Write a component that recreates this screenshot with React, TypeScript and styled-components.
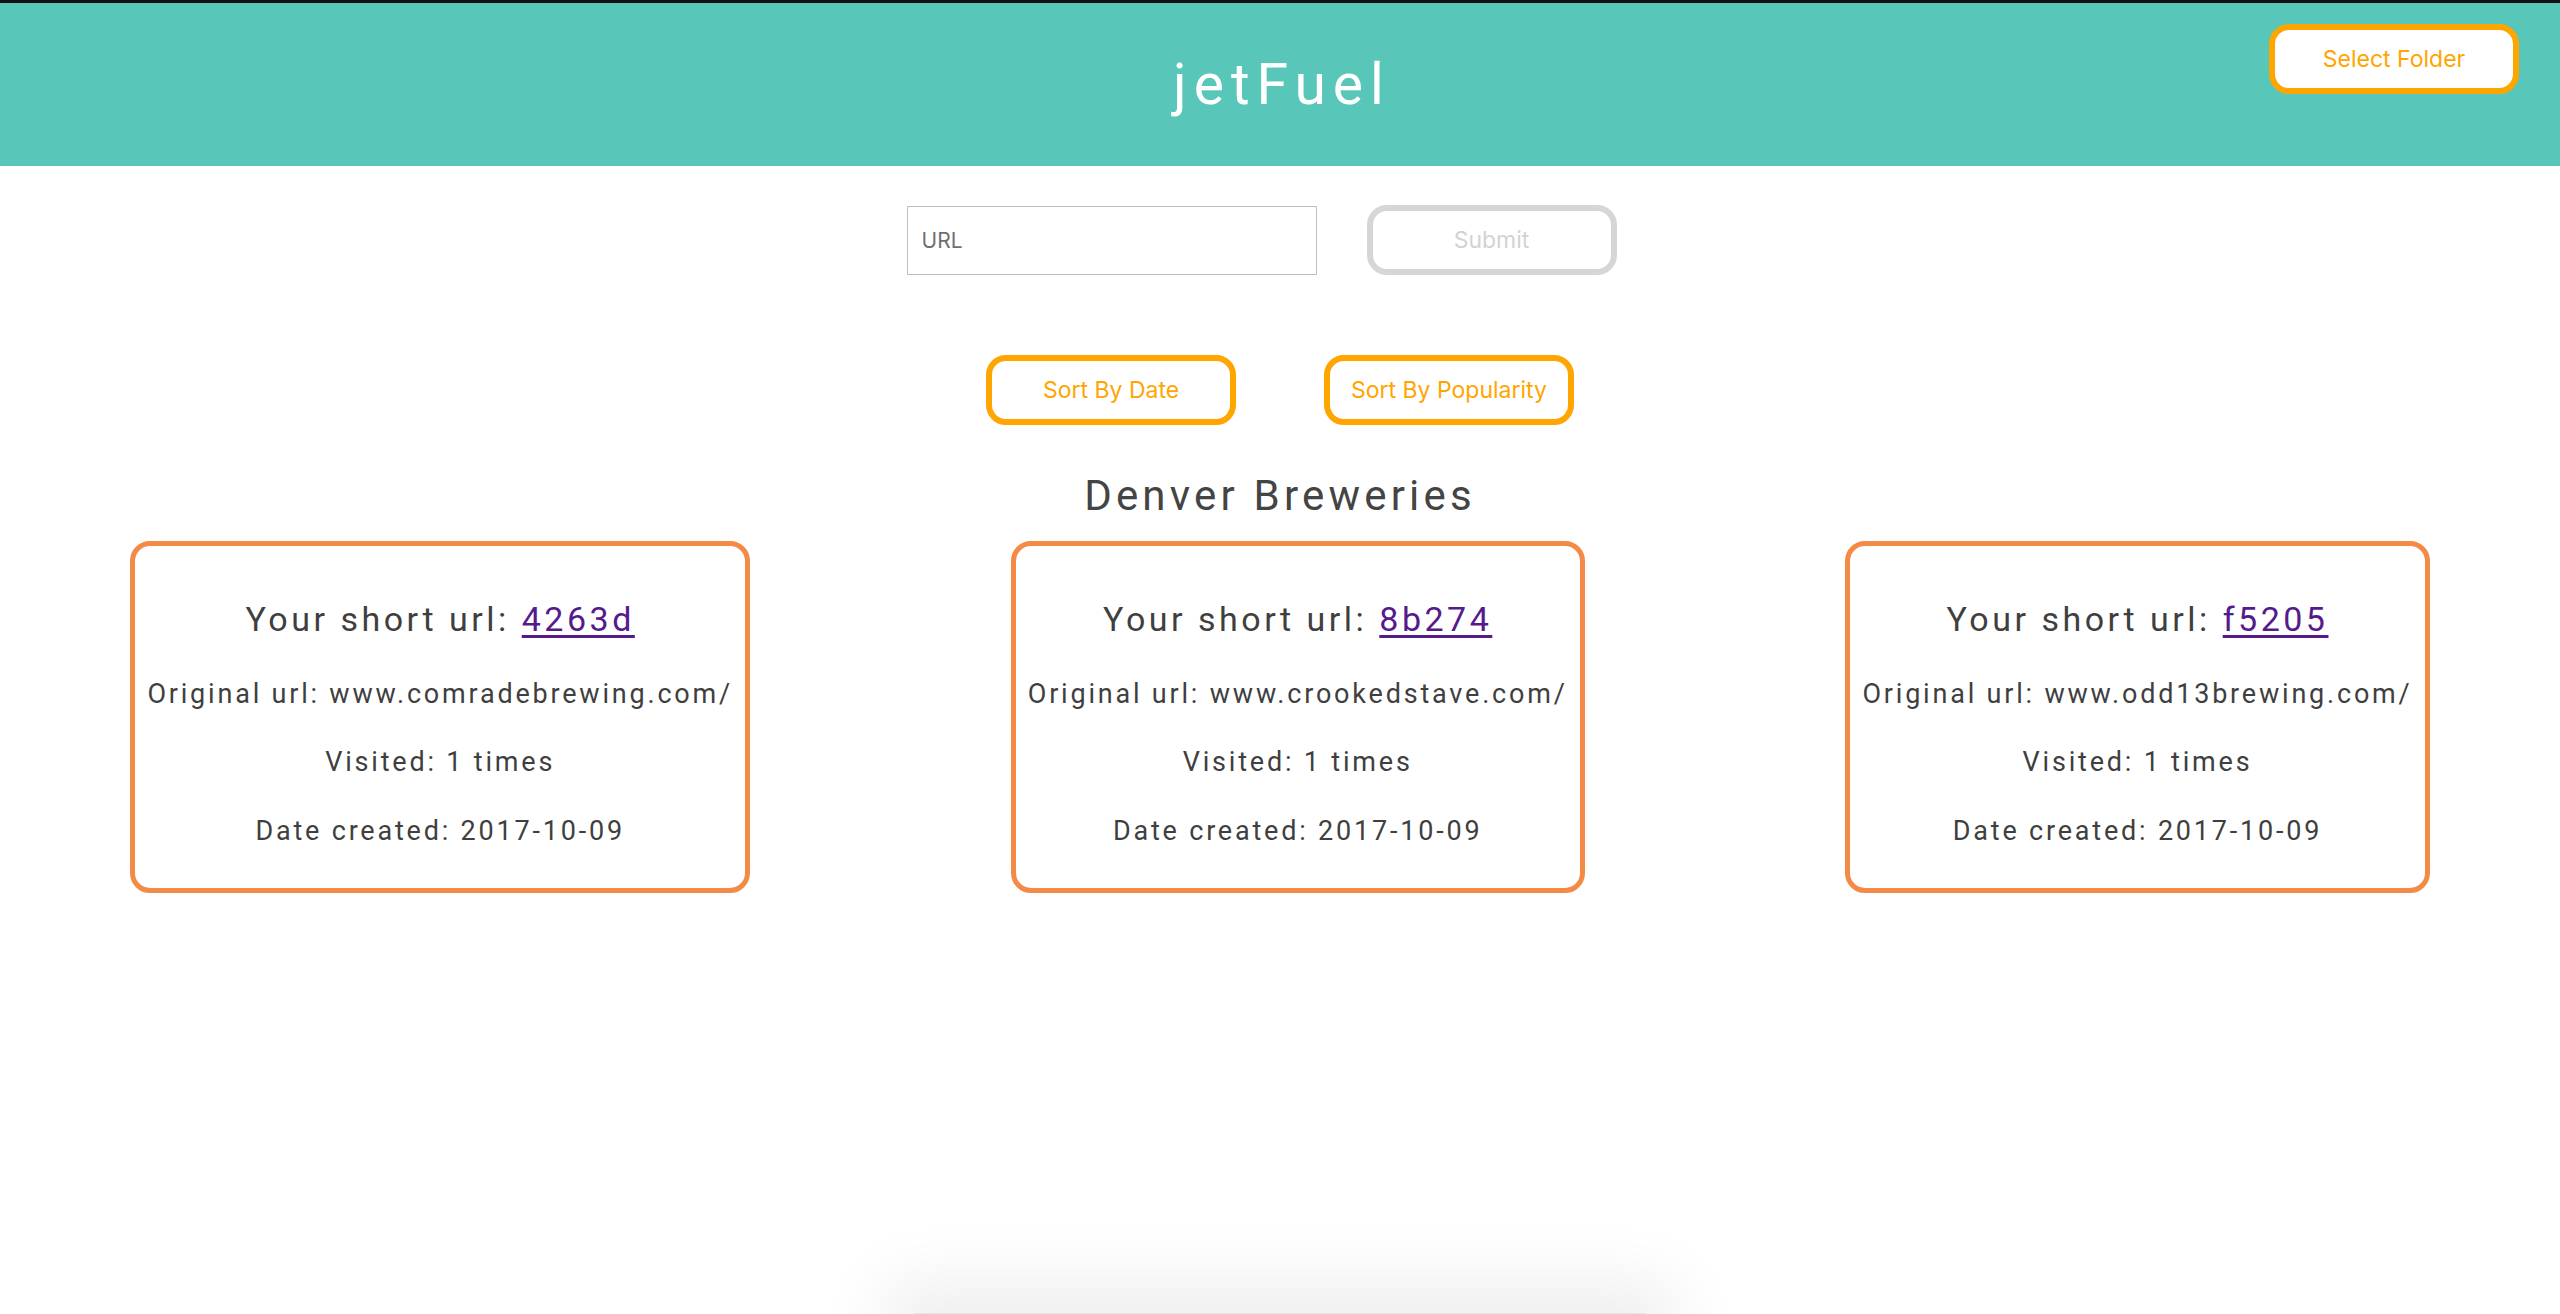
import React from "react";
import styled, { createGlobalStyle } from "styled-components";

const GlobalStyle = createGlobalStyle`
  html, body {
    margin: 0;
    padding: 0;
    background: #ffffff;
  }
  body {
    font-family: Roboto, "Liberation Sans", sans-serif;
    color: #444444;
  }
  * { box-sizing: border-box; }
`;

const Page = styled.div`
  min-height: 1314px;
  background: #ffffff;
`;

const TopStrip = styled.div`
  height: 3px;
  background: #111111;
`;

const Header = styled.header`
  height: 163px;
  background: #58c6b8;
  display: grid;
  grid-template-columns: 1fr auto 1fr;
  align-items: center;
`;

const Title = styled.h1`
  grid-column: 2;
  margin: 0;
  padding-left: 4px;
  font-family: Roboto, "Liberation Sans", sans-serif;
  font-weight: 400;
  font-size: 57px;
  letter-spacing: 7px;
  color: #ffffff;
  line-height: 1;
`;

const HeaderRight = styled.div`
  grid-column: 3;
  align-self: start;
  justify-self: end;
  margin-top: 21px;
  margin-right: 41px;
`;

const Button = styled.button<{ $muted?: boolean }>`
  width: 250px;
  height: 70px;
  border: 6px solid ${(p) => (p.$muted ? "#d6d6d6" : "#ffa500")};
  border-radius: 20px;
  background: #ffffff;
  color: ${(p) => (p.$muted ? "#d3d3d3" : "#ffa500")};
  font-family: Inter, "Liberation Sans", sans-serif;
  font-size: 23px;
  font-weight: 400;
  padding: 0;
  cursor: pointer;
`;

const FormRow = styled.form`
  display: flex;
  justify-content: center;
  align-items: center;
  gap: 50px;
  margin-top: 39px;
  padding-right: 37px;
`;

const UrlInput = styled.input`
  width: 410px;
  height: 69px;
  border: 1px solid #bfbfbf;
  border-radius: 0;
  padding: 0 14px;
  font-family: Inter, "Liberation Sans", sans-serif;
  font-size: 21px;
  color: #444;
  outline: none;
  &::placeholder {
    color: #6f6f6f;
  }
`;

const SortRow = styled.div`
  display: flex;
  justify-content: center;
  gap: 88px;
  margin-top: 80px;
`;

const FolderTitle = styled.h2`
  margin: 46px 0 0;
  text-align: center;
  font-family: Roboto, "Liberation Sans", sans-serif;
  font-weight: 400;
  font-size: 42px;
  line-height: 50px;
  letter-spacing: 4.2px;
  color: #444444;
`;

const CardRow = styled.section`
  display: flex;
  justify-content: space-around;
  align-items: flex-start;
  margin-top: 20px;
`;

const Card = styled.article`
  border: 5px solid #f38b47;
  border-radius: 20px;
  padding: 53px 12px 41px;
  display: flex;
  flex-direction: column;
  align-items: center;
  text-align: center;
  background: #ffffff;
`;

const ShortLine = styled.div`
  font-size: 34px;
  line-height: 40px;
  letter-spacing: 3.5px;
  color: #3f3f3f;
`;

const ShortLink = styled.a`
  color: #551a8b;
  text-decoration: underline;
  text-underline-offset: 4px;
`;

const InfoLine = styled.div<{ $gap: number }>`
  margin-top: ${(p) => p.$gap}px;
  font-size: 27px;
  line-height: 32px;
  letter-spacing: 2.8px;
  color: #3f3f3f;
  white-space: nowrap;
`;

const DockShadow = styled.div`
  position: fixed;
  left: 50%;
  bottom: -40px;
  width: 732px;
  height: 41px;
  transform: translateX(-50%);
  background: #e6e6e6;
  box-shadow: 0 0 70px 30px rgba(0, 0, 0, 0.07);
  pointer-events: none;
`;

type Link = {
  short: string;
  original: string;
  visited: number;
  created: string;
};

const links: Link[] = [
  { short: "4263d", original: "www.comradebrewing.com/", visited: 1, created: "2017-10-09" },
  { short: "8b274", original: "www.crookedstave.com/", visited: 1, created: "2017-10-09" },
  { short: "f5205", original: "www.odd13brewing.com/", visited: 1, created: "2017-10-09" },
];

function LinkCard({ link }: { link: Link }) {
  return (
    <Card>
      <ShortLine>
        Your short url: <ShortLink href="#">{link.short}</ShortLink>
      </ShortLine>
      <InfoLine $gap={39}>Original url: {link.original}</InfoLine>
      <InfoLine $gap={36}>Visited: {link.visited} times</InfoLine>
      <InfoLine $gap={37}>Date created: {link.created}</InfoLine>
    </Card>
  );
}

export default function App() {
  return (
    <Page>
      <GlobalStyle />
      <TopStrip />
      <Header>
        <Title>jetFuel</Title>
        <HeaderRight>
          <Button type="button">Select Folder</Button>
        </HeaderRight>
      </Header>
      <FormRow onSubmit={(e) => e.preventDefault()}>
        <UrlInput placeholder="URL" />
        <Button $muted type="submit" disabled>
          Submit
        </Button>
      </FormRow>
      <SortRow>
        <Button type="button">Sort By Date</Button>
        <Button type="button">Sort By Popularity</Button>
      </SortRow>
      <FolderTitle>Denver Breweries</FolderTitle>
      <CardRow>
        {links.map((l) => (
          <LinkCard key={l.short} link={l} />
        ))}
      </CardRow>
      <DockShadow />
    </Page>
  );
}
